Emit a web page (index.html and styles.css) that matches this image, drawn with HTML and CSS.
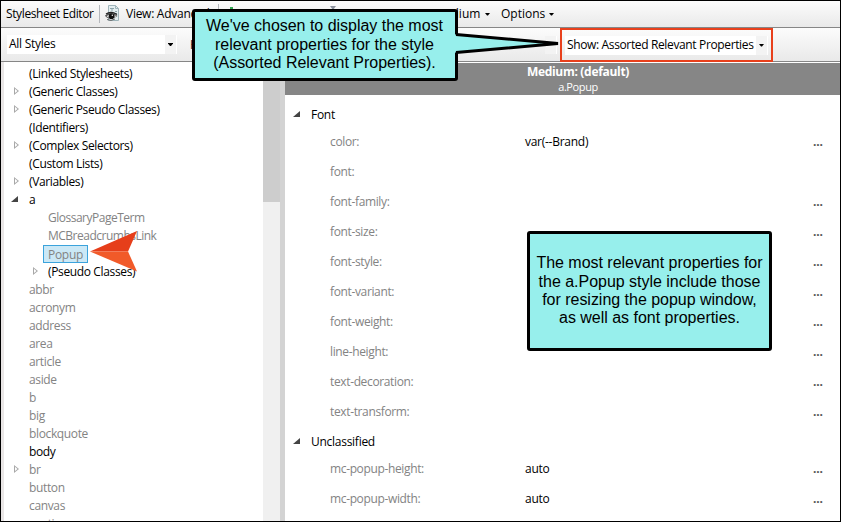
FILE: index.html
```html
<!DOCTYPE html>
<html lang="en">
<head>
<meta charset="utf-8">
<title>Stylesheet Editor</title>
<link rel="stylesheet" href="styles.css">
</head>
<body>
<div class="window">
  <header class="toolbar top">
    <span class="title">Stylesheet Editor</span>
    <i class="sep"></i>
    <svg class="view-icon" width="16" height="18" viewBox="0 0 16 18">
      <path d="M3.500 .5h7l3 3v12h-10z" fill="#e3eef0" stroke="#9fb4ba"/>
      <path d="M10.500 .5v3h3" fill="none" stroke="#9fb4ba"/>
      <path d="M5 3.500h4M7 3.500v3M10 6.500h2M10 8.500h2" stroke="#8ba3aa"/>
      <path d="M0 10.500Q6 5 12.500 11Q6 16 1 12z" fill="#555"/>
      <path d="M1 9Q6 5.500 12 9.500" fill="none" stroke="#222" stroke-width="1.300"/>
      <path d="M1.500 11.500Q3 9.500 4 10v2.500zM9.500 10l1.800 1.200-1.800 1.300z" fill="#e8e8e8"/>
      <circle cx="6.500" cy="11.300" r="2.800" fill="#111"/>
      <circle cx="7.300" cy="10.300" r=".7" fill="#fff"/>
      <path d="M2 14.500Q6 16.500 10 14" fill="none" stroke="#666"/>
    </svg>
    <span class="view">View: Advanced</span>
    <i class="sep sep-add"></i>
    <i class="add"></i>
    <i class="funnel"></i>
    <span class="medium">Medium</span><i class="caret"></i>
    <span class="options">Options</span><i class="caret"></i>
  </header>
  <div class="toolbar filters">
    <div class="combo styles"><span>All Styles</span><b><i class="caret"></i></b></div>
    <span class="hide">Hide</span>
    <b class="combo-end"></b>
    <div class="highlight"><div class="combo show"><span>Show: Assorted Relevant Properties</span><b><i class="caret"></i></b></div></div>
  </div>
  <main class="panes">
    <ul class="tree">
      <li>(Linked Stylesheets)</li>
      <li class="closed">(Generic Classes)</li>
      <li class="closed">(Generic Pseudo Classes)</li>
      <li>(Identifiers)</li>
      <li class="closed">(Complex Selectors)</li>
      <li>(Custom Lists)</li>
      <li class="closed">(Variables)</li>
      <li class="open">a</li>
      <li class="child dim">GlossaryPageTerm</li>
      <li class="child dim">MCBreadcrumbsLink</li>
      <li class="child dim"><span class="selected">Popup</span></li>
      <li class="child closed">(Pseudo Classes)</li>
      <li class="dim">abbr</li>
      <li class="dim">acronym</li>
      <li class="dim">address</li>
      <li class="dim">area</li>
      <li class="dim">article</li>
      <li class="dim">aside</li>
      <li class="dim">b</li>
      <li class="dim">big</li>
      <li class="dim">blockquote</li>
      <li>body</li>
      <li class="dim closed">br</li>
      <li class="dim">button</li>
      <li class="dim">canvas</li>
      <li class="dim">caption</li>
    </ul>
    <div class="scrollbar"><i></i></div>
    <div class="splitter"></div>
    <section class="properties">
      <div class="heading"><strong>Medium: (default)</strong><span>a.Popup</span></div>
      <h2>Font</h2>
      <div class="row"><label>color:</label><span>var(--Brand)</span><em>...</em></div>
      <div class="row"><label>font:</label></div>
      <div class="row"><label>font-family:</label><span></span><em>...</em></div>
      <div class="row"><label>font-size:</label><span></span><em>...</em></div>
      <div class="row"><label>font-style:</label><span></span><em>...</em></div>
      <div class="row"><label>font-variant:</label><span></span><em>...</em></div>
      <div class="row"><label>font-weight:</label><span></span><em>...</em></div>
      <div class="row"><label>line-height:</label><span></span><em>...</em></div>
      <div class="row"><label>text-decoration:</label><span></span><em>...</em></div>
      <div class="row"><label>text-transform:</label><span></span><em>...</em></div>
      <h2>Unclassified</h2>
      <div class="row"><label>mc-popup-height:</label><span>auto</span><em>...</em></div>
      <div class="row"><label>mc-popup-width:</label><span>auto</span><em>...</em></div>
    </section>
  </main>
</div>
<svg class="pointer" width="48" height="41" viewBox="0 0 48 41">
  <path d="M0 20.500L47 0 38 20.500z" fill="#e63e1a"/>
  <path d="M0 20.500H38L47 40.500z" fill="#f15a29"/>
</svg>
<div class="callout first"><p>We've chosen to display the most<br>relevant properties for the style<br>(Assorted Relevant Properties).</p></div>
<svg class="tail" width="112" height="24" viewBox="0 0 112 24">
  <path d="M0 3.500H3L103 12.500 3 21.500H0z" fill="#97efec"/>
  <path d="M2 3.500L104 12.500 2 21.500" fill="none" stroke="#000" stroke-width="3"/>
</svg>
<div class="callout second"><p>The most relevant properties for<br>the a.Popup style include those<br>for resizing the popup window,<br>as well as font properties.</p></div>
</body>
</html>
```

FILE: styles.css
```css
* { box-sizing: border-box; }
body { margin: 0; overflow: hidden; font: 12px/18px "Open Sans", "Noto Sans", sans-serif; letter-spacing: -0.27px; color: #000; }
.window { width: 841px; height: 522px; border: 1px solid #000; background: #fff; display: flex; flex-direction: column; overflow: hidden; }
.toolbar { display: flex; align-items: center; flex: none; white-space: nowrap; border-bottom: 1px solid #868686; background: linear-gradient(#fcfcfc, #e9e9e9); }
.toolbar > *, .toolbar b { flex-shrink: 0; }
.top { height: 27px; padding-left: 5px; }
.title { width: 93px; letter-spacing: -0.38px; }
.sep { width: 1px; height: 18px; background: #b5b8bd; }
.view-icon { margin-left: 5px; }
.view { width: 92px; margin-left: 5px; }
.sep-add { height: 20px; }
.add { width: 3px; height: 12px; margin-left: 11px; background: #35a853; align-self: flex-start; margin-top: 6px; }
.funnel { margin: 5px 0 0 97px; align-self: flex-start; border: 3px solid transparent; border-top: 4px solid #8d929e; }
.medium { width: 51px; margin-left: 98px; letter-spacing: 0; }
.options { width: 48px; margin-left: 11px; letter-spacing: 0; }
.caret { display: block; width: 5px; height: 3px; background: #000; clip-path: polygon(0 0, 100% 0, 100% 20%, 60% 100%, 40% 100%, 0 20%); }
.filters { height: 34px; padding-left: 6px; }
.combo { display: flex; height: 19px; background: #fff; justify-content: space-between; line-height: 18px; }
.combo b { width: 11px; background: #f3f3f3; display: flex; align-items: center; justify-content: center; }
.styles { width: 170px; padding-left: 2px; }
.styles b { margin-right: 1px; }
.hide { width: 26px; margin-left: 13px; color: #321; }
.combo-end { width: 12px; height: 18px; margin-left: 329px; background: #f3f3f3; border-right: 1px solid #fff; }
.highlight { width: 213px; height: 34px; margin-left: 3px; border: 2px solid #e8401c; padding: 6px 3px; }
.show { padding: 0 1px 0 2px; letter-spacing: -0.36px; }
.panes { flex: 1; min-height: 0; display: flex; background: #fff; }
.tree { width: 262px; margin: 0; padding: 3px 0 0; list-style: none; border-left: 3px solid #e9e6e6; overflow: hidden; letter-spacing: -0.36px; }
.tree li { height: 18px; padding-left: 25px; display: flex; white-space: nowrap; }
.tree .child { padding-left: 44px; }
.tree .child.dim { letter-spacing: -0.5px; }
.dim { color: #838383; }
.closed::before { content: ""; width: 5px; height: 8px; margin: 4px 10px 0 -15px; background: #a8a8a8; clip-path: polygon(0 0, 100% 50%, 0 100%, 0 1px, 1px 2px, 1px 6px, 3.500px 4px, 0 1px); }
.open::before, h2::before { content: ""; width: 7px; height: 6px; background: #444; clip-path: polygon(100% 0, 100% 100%, 0 100%); }
.open::before { margin: 5px 11px 0 -18px; }
.tree .selected { width: 45px; height: 18px; margin-left: -5px; padding-left: 4px; border: 1px solid #3ba3dc; background: #cbe8f6; line-height: 17px; letter-spacing: -0.3px; }
.scrollbar { width: 17px; background: #f0f0f0; }
.scrollbar i { display: block; height: 140px; background: #cdcdcd; }
.splitter { width: 5px; background: #d3d3d3; }
.properties { flex: 1; }
.heading { height: 32px; margin: 1px 0 5px; padding-left: 31px; background: #868686; color: #fff; display: flex; flex-direction: column; align-items: center; font-size: 11px; line-height: 14px; letter-spacing: -0.4px; }
.heading strong { margin-top: 1px; font-size: 12px; line-height: 16px; letter-spacing: -0.3px; }
h2 { height: 27px; margin: 0; padding: 3px 0 0 8px; font: inherit; line-height: 24px; display: flex; }
h2::before { margin: 8px 11px 0 0; }
.row { height: 30px; padding-left: 45px; line-height: 30px; display: flex; }
.row label { width: 195px; color: #838383; letter-spacing: -0.36px; }
.row span { width: 288px; }
.row em { font-style: normal; font-weight: bold; color: #555; letter-spacing: -0.2px; }
.callout { position: absolute; display: flex; align-items: center; justify-content: center; border: 3px solid #000; border-radius: 3px; background: #97efec; font: 16px/18.400px "Liberation Sans", sans-serif; letter-spacing: -0.02px; text-align: center; white-space: nowrap; }
.callout p { margin: 0; }
.first { left: 192px; top: 9px; width: 266px; height: 72px; padding-right: 1px; }
.second { left: 527px; top: 231px; width: 245px; height: 120px; }
.tail { position: absolute; left: 454px; top: 31px; }
.pointer { position: absolute; left: 90px; top: 231px; }
```
